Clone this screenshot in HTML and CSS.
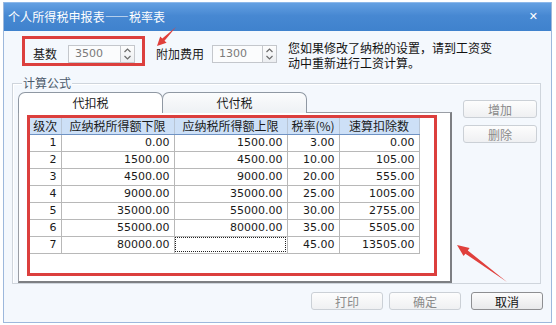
FILE: index.html
```html
<!DOCTYPE html>
<html lang="zh-CN">
	<head>
		<meta charset="UTF-8" />
		<meta name="viewport" content="width=device-width, initial-scale=1.0" />
		<title>个人所得税申报表——税率表</title>
		<link rel="stylesheet" href="styles.css">
	</head>
	<body>
		<div class="window">
			<div class="titlebar">
				<span class="title">个人所得税申报表——税率表</span>
				<span class="close">✕</span>
			</div>

			<div class="topRow">
				<div class="baseBox">
					<span class="lbl">基数</span>
					<div class="spinInput">
						<span class="val">3500</span>
						<span class="spin">
							<svg width="13" height="16" viewBox="0 0 13 16"><path d="M3.5 6 L6.5 3 L9.5 6" fill="none" stroke="#6b6b6b" stroke-width="1.2"/><path d="M3.5 10 L6.5 13 L9.5 10" fill="none" stroke="#6b6b6b" stroke-width="1.2"/></svg>
						</span>
					</div>
				</div>
				<span class="lbl extraLbl">附加费用</span>
				<div class="spinInput extraInput">
					<span class="val">1300</span>
					<span class="spin">
						<svg width="13" height="16" viewBox="0 0 13 16"><path d="M3.5 6 L6.5 3 L9.5 6" fill="none" stroke="#6b6b6b" stroke-width="1.2"/><path d="M3.5 10 L6.5 13 L9.5 10" fill="none" stroke="#6b6b6b" stroke-width="1.2"/></svg>
					</span>
				</div>
				<div class="hint">
					<span class="hintLine">您如果修改了纳税的设置，请到工资变</span>
					<span class="hintLine">动中重新进行工资计算。</span>
				</div>
			</div>

			<div class="group">
				<div class="groupTitle">计算公式</div>
				<div class="groupBody">
					<div class="tabsArea">
						<div class="tabs">
							<div class="tab active">代扣税</div>
							<div class="tab">代付税</div>
						</div>
						<div class="tabPanel">
							<div class="tableMark">
								<table class="rates">
									<tr class="head">
										<th class="c1">级次</th>
										<th class="c2">应纳税所得额下限</th>
										<th class="c3">应纳税所得额上限</th>
										<th class="c4">税率(%)</th>
										<th class="c5">速算扣除数</th>
									</tr>
									<tr><td>1</td><td>0.00</td><td>1500.00</td><td>3.00</td><td>0.00</td></tr>
									<tr><td>2</td><td>1500.00</td><td>4500.00</td><td>10.00</td><td>105.00</td></tr>
									<tr><td>3</td><td>4500.00</td><td>9000.00</td><td>20.00</td><td>555.00</td></tr>
									<tr><td>4</td><td>9000.00</td><td>35000.00</td><td>25.00</td><td>1005.00</td></tr>
									<tr><td>5</td><td>35000.00</td><td>55000.00</td><td>30.00</td><td>2755.00</td></tr>
									<tr><td>6</td><td>55000.00</td><td>80000.00</td><td>35.00</td><td>5505.00</td></tr>
									<tr><td>7</td><td>80000.00</td><td class="focus"></td><td>45.00</td><td>13505.00</td></tr>
								</table>
							</div>
						</div>
					</div>
					<div class="sideBtns">
						<button class="btn" disabled>增加</button>
						<button class="btn" disabled>删除</button>
					</div>
				</div>
			</div>

			<div class="footer">
				<button class="btn" disabled>打印</button>
				<button class="btn" disabled>确定</button>
				<button class="btn primary">取消</button>
			</div>
		</div>

		<!-- red annotation arrows drawn over the dialog -->
		<svg class="marks" width="556" height="325" viewBox="0 0 556 325">
			<polygon points="157,46 166.6,42.8 164.5,40.7 176,27 162.3,38.5 160.2,36.5" fill="#e0403c" />
			<polygon points="457,245 469.6,248.1 467.8,250.5 507,282 465.4,253.7 463.6,256.1" fill="#e0403c" />
		</svg>
	</body>
</html>
```

FILE: styles.css
```css
* {
	box-sizing: border-box;
}
body {
	margin: 0;
	width: 556px;
	height: 325px;
	overflow: hidden;
	position: relative;
	background: #fff;
	font-family: "Noto Sans CJK SC", sans-serif;
	font-size: 12px;
	color: #1a1a1a;
}
.window {
	margin: 2px 4px 0 3px;
	height: 321px;
	border: 1px solid #9db8dc;
	border-top: none;
	background: #f4f8fd;
	display: flex;
	flex-direction: column;
}
.titlebar {
	height: 29px;
	flex-shrink: 0;
	padding: 0 13px 0 4px;
	display: flex;
	align-items: center;
	justify-content: space-between;
	background: linear-gradient(#64a0e2, #4788d2 45%, #3f82cd);
	border-top: 1px solid #8cb8ea;
	color: #fff;
}
.title {
	font-size: 12px;
	line-height: 14px;
	letter-spacing: 0.1px;
}
.close {
	font-family: "DejaVu Sans", sans-serif;
	font-size: 11px;
	font-weight: bold;
	line-height: 12px;
}

/* top settings row */
.topRow {
	margin-top: 5px;
	height: 30px;
	flex-shrink: 0;
	display: flex;
	align-items: flex-start;
}
.baseBox {
	margin-left: 18px;
	width: 123px;
	height: 30px;
	border: 3px solid #dc3f3d;
	padding: 6px 0 0 8px;
	display: flex;
	align-items: center;
}
.lbl {
	line-height: 18px;
	white-space: nowrap;
}
.spinInput {
	margin-left: 11px;
	height: 18px;
	display: flex;
}
.spinInput .val {
	width: 52px;
	height: 18px;
	border: 1px solid #c4c7cc;
	border-right: none;
	background: #fbfcfd;
	padding-left: 6px;
	font-family: "DejaVu Sans", sans-serif;
	font-size: 11px;
	line-height: 16px;
	color: #7a7a7a;
}
.spinInput .spin {
	width: 15px;
	height: 18px;
	border: 1px solid #c4c7cc;
	background: linear-gradient(#fdfdfd, #eceef1);
	display: flex;
	align-items: center;
	justify-content: center;
}
.extraLbl {
	margin: 9px 0 0 11px;
}
.extraInput {
	margin: 9px 0 0 8px;
}
.extraInput .val {
	width: 50px;
}
.hint {
	margin: 4px 0 0 11px;
	display: flex;
	flex-direction: column;
	color: #111;
}
.hintLine {
	height: 15px;
	line-height: 15px;
	white-space: nowrap;
}

/* group box */
.group {
	margin: 17px 0 0 8px;
	width: 529px;
	flex-shrink: 0;
	border: 1px solid #cfd5dc;
	box-shadow: inset 1px 1px 0 #fff;
}
.groupTitle {
	margin: -8px 0 0 9px;
	width: fit-content;
	padding: 0 1px;
	line-height: 14px;
	background: #f4f8fd;
	color: #4b5a6b;
}
.groupBody {
	padding-left: 5px;
	display: flex;
	align-items: flex-start;
}
.tabsArea {
	margin-top: 2px;
	width: 434px;
}
.tabs {
	display: flex;
	height: 20px;
}
.tab {
	width: 145px;
	height: 21px;
	border: 1px solid #8f98a3;
	border-bottom: none;
	border-radius: 7px 7px 0 0;
	background: linear-gradient(#fbfcfd, #eef1f4);
	text-align: center;
	line-height: 19px;
	position: relative;
}
.tab.active {
	background: #fff;
	z-index: 1;
}
.tab + .tab {
	margin-left: -1px;
}
.tabPanel {
	height: 171px;
	border: 1px solid #9a9ea5;
	border-right: 2px solid #7d7f83;
	border-bottom: 2px solid #7d7f83;
	background: #fff;
	padding: 2px 0 0 8px;
}
.tableMark {
	width: 410px;
	height: 161px;
	border: 3px solid #dc3f3d;
	background: #fff;
}
.rates {
	border-collapse: collapse;
	table-layout: fixed;
	width: 389px;
}
.rates th,
.rates td {
	padding: 0 4px 0 0;
	border: 1px solid #b8b8b8;
	text-align: right;
	white-space: nowrap;
	overflow: hidden;
}
.rates th {
	height: 16px;
	background: #cde0f7;
	border-color: #b9c6d6;
	border-bottom: 1px solid #6f93c4;
	font-weight: normal;
	text-align: center;
	padding: 0;
	line-height: 14px;
	color: #1a1a1a;
}
.rates td {
	height: 17px;
	font-family: "DejaVu Sans", sans-serif;
	font-size: 11px;
	line-height: 15px;
	color: #1a1a1a;
}
.rates tr > *:first-child {
	border-left: none;
}
.rates .head > * {
	border-top: none;
}
.c1 { width: 31px; }
.c2 { width: 113px; }
.c3 { width: 113px; }
.c4 { width: 52px; }
.c5 { width: 80px; }
.rates td.focus {
	outline: 1px dotted #222;
	outline-offset: -2px;
}

/* buttons */
.btn {
	width: 74px;
	height: 18px;
	padding: 0;
	border: 1px solid #cbd0d6;
	border-radius: 3px;
	background: linear-gradient(#fdfdfd, #eff0f2);
	font-family: "Noto Sans CJK SC", sans-serif;
	font-size: 12px;
	line-height: 15px;
	color: #8a8a8a;
}
.btn.primary {
	border-color: #8e8f92;
	background: linear-gradient(#fcfcfc, #e8e9eb);
	color: #111;
}
.sideBtns {
	margin: 10px 0 0 11px;
	display: flex;
	flex-direction: column;
	gap: 7px;
}
.footer {
	margin-top: 8px;
	padding-right: 8px;
	display: flex;
	justify-content: flex-end;
}
.footer .btn {
	width: 72px;
	margin-left: 6px;
}
.footer .primary {
	margin-left: 10px;
}

.marks {
	position: absolute;
	left: 0;
	top: 0;
	pointer-events: none;
}
```
